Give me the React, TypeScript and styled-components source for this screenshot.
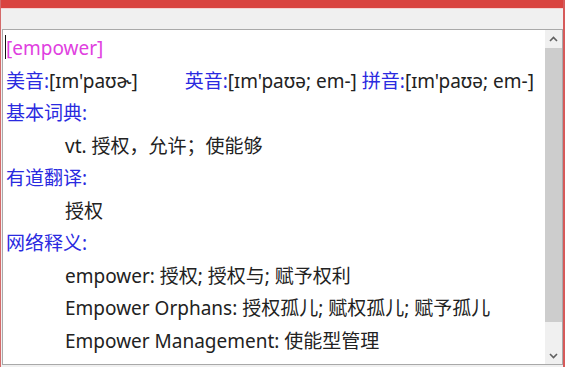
import React from 'react'
import styled, { createGlobalStyle } from 'styled-components'

const GlobalStyle = createGlobalStyle`
  html, body {
    margin: 0;
    padding: 0;
    background: #ffffff;
  }
`

const Window = styled.div`
  width: 565px;
  height: 367px;
  box-sizing: border-box;
  display: flex;
  flex-direction: column;
  background: #f0f0f0;
  border-left: 1px solid #d46a6a;
  border-right: 2px solid #d65a5a;
  overflow: hidden;
`

const TitleBar = styled.div`
  height: 8px;
  flex: none;
  background: #d9433f;
`

const Toolbar = styled.div`
  height: 20px;
  flex: none;
  background: #f0f0f0;
  border-top: 1px solid #f4d2d2;
`

const Body = styled.div`
  flex: 1;
  display: flex;
  margin: 0 0 2px 1px;
  border: 1px solid #a9a9a9;
  background: #ffffff;
  min-height: 0;
`

const Content = styled.div`
  flex: 1;
  position: relative;
  padding: 2px 0 0 3px;
  font-family: 'Noto Sans', 'Noto Sans CJK SC', sans-serif;
  font-size: 19px;
  line-height: 32.5px;
  color: #222222;
  white-space: nowrap;
  overflow: hidden;
`

const Caret = styled.span`
  position: absolute;
  left: 2px;
  top: 5px;
  width: 1px;
  height: 24px;
  background: #111111;
`

const Line = styled.div<{ $indent?: boolean }>`
  padding-left: ${({ $indent }) => ($indent ? '59px' : '0')};
`

const Word = styled.span`
  color: #e040e0;
`

const Label = styled.span`
  color: #2a2ae0;
`

const Gap = styled.span<{ $w: number }>`
  display: inline-block;
  width: ${({ $w }) => $w}px;
`

const ScrollBar = styled.div`
  width: 17px;
  flex: none;
  display: flex;
  flex-direction: column;
  background: #f0f0f0;
`

const Arrow = styled.div`
  height: 17px;
  flex: none;
  display: flex;
  align-items: center;
  justify-content: center;
`

const Track = styled.div`
  flex: 1;
  display: flex;
  flex-direction: column;
  padding: 1px 0 25px;
`

const Thumb = styled.div`
  flex: 1;
  background: #cdcdcd;
`

const Chevron: React.FC<{ up?: boolean }> = ({ up }) => (
  <svg width="9" height="6" viewBox="0 0 9 6">
    <path
      d={up ? 'M1 5 L4.5 1.5 L8 5' : 'M1 1 L4.5 4.5 L8 1'}
      fill="none"
      stroke="#606060"
      strokeWidth="1.6"
    />
  </svg>
)

export default function App() {
  return (
    <>
      <GlobalStyle />
      <Window>
        <TitleBar />
        <Toolbar />
        <Body>
          <Content>
            <Caret />
            <Line>
              <Word>[empower]</Word>
            </Line>
            <Line>
              <Label>美音:</Label>[ɪm'paʊɚ]
              <Gap $w={47} />
              <Label>英音:</Label>[ɪm'paʊə; em-] <Label>拼音:</Label>[ɪm'paʊə; em-]
            </Line>
            <Line>
              <Label>基本词典:</Label>
            </Line>
            <Line $indent>vt. 授权，允许；使能够</Line>
            <Line>
              <Label>有道翻译:</Label>
            </Line>
            <Line $indent>授权</Line>
            <Line>
              <Label>网络释义:</Label>
            </Line>
            <Line $indent>empower: 授权; 授权与; 赋予权利</Line>
            <Line $indent>Empower Orphans: 授权孤儿; 赋权孤儿; 赋予孤儿</Line>
            <Line $indent>Empower Management: 使能型管理</Line>
          </Content>
          <ScrollBar>
            <Arrow>
              <Chevron up />
            </Arrow>
            <Track>
              <Thumb />
            </Track>
            <Arrow>
              <Chevron />
            </Arrow>
          </ScrollBar>
        </Body>
      </Window>
    </>
  )
}
